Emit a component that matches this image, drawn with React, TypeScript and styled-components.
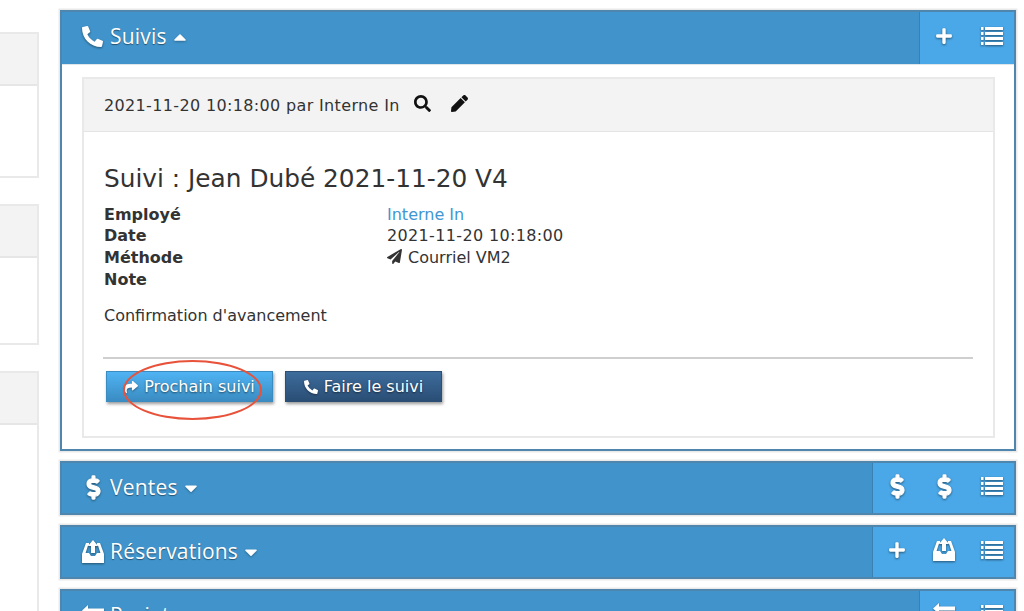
import React from "react";
import styled, { createGlobalStyle } from "styled-components";
import { FaPhoneAlt, FaPlus, FaSearch, FaPen, FaPaperPlane, FaDollarSign, FaShare, FaCaretUp, FaCaretDown } from "react-icons/fa";

const Global = createGlobalStyle`
  html, body { margin: 0; padding: 0; background: #fff; overflow: hidden; height: 611px; }
  body { font-family: "DejaVu Sans", Verdana, sans-serif; color: #333; }
`;

const Page = styled.div`
  width: 1024px; height: 611px; overflow: hidden;
  display: flex; align-items: flex-start; gap: 21px;
`;
const Sidebar = styled.aside`
  width: 39px; flex: none; padding-top: 32px;
  display: flex; flex-direction: column; gap: 26px;
`;
const SideCard = styled.div<{ $h: number }>`
  height: ${p => p.$h}px; box-sizing: border-box;
  border: 2px solid #e9e9e9; border-left: 0; background: #fff;
`;
const SideHead = styled.div`
  height: 50px; background: #f3f3f3; border-bottom: 2px solid #e6e6e6;
`;
const Main = styled.main`
  width: 956px; flex: none; margin-top: -14px;
  display: flex; flex-direction: column; gap: 10px;
`;
const TopSliver = styled.div`
  height: 14px; box-sizing: border-box; border-bottom: 2px solid #e4e6e8;
`;
const Panel = styled.section`
  border: 2px solid #4f86ad; box-sizing: border-box; background: #fff;
  box-shadow: 0 0 0 1.5px #e9e9e9;
`;
const PanelBar = styled.header<{ $open?: boolean }>`
  height: ${p => (p.$open ? 52 : 50)}px; background: #4094cb; display: flex; align-items: stretch; justify-content: space-between;
  color: #fff; text-shadow: 0 1px 1px rgba(0,0,0,.45);
`;
const PanelTitle = styled.h2<{ $open?: boolean }>`
  margin: 0; padding: 0 0 ${p => (p.$open ? 3 : 1)}px 20px; display: flex; align-items: center;
  font: 400 21px/1 "Open Sans", sans-serif; letter-spacing: .2px; color: #fff;
`;
const TitleIcon = styled.span`
  width: 28px; display: inline-flex; justify-content: flex-start; font-size: 21px;
  svg { filter: drop-shadow(0 1px 1px rgba(0,0,0,.45)); display: block; }
`;
const Caret = styled.span`
  margin-left: 3px; display: inline-flex; font-size: 20px;
  svg { display: block; filter: drop-shadow(0 1px 1px rgba(0,0,0,.3)); }
`;
const Actions = styled.div`
  display: flex; background: #4aa8e8; border-left: 1px solid #3a80b0;
`;
const ActionButton = styled.button`
  width: 47px; box-sizing: border-box; padding: 0 0 4px 1px; border: 0; background: transparent; color: #fff;
  display: flex; align-items: center; justify-content: center; font-size: 21px;
  &:last-child { padding-left: 3px; }
  svg { display: block; filter: drop-shadow(0 1.5px 1px rgba(0,0,0,.5)); }
`;
const PanelBody = styled.div`
  padding: 12px 19px 11px 20px; border-top: 1px solid #dfe6ea;
`;
const Card = styled.article`
  border: 2px solid #e9e9e9; background: #fff;
`;
const CardHead = styled.div`
  height: 53px; box-sizing: border-box; background: #f3f3f3; border-bottom: 1px solid #e4e4e4;
  display: flex; align-items: center; padding: 1px 0 0 20px; font-size: 16px; letter-spacing: .35px; color: #333;
`;
const HeadIcon = styled.span<{ $gap: number }>`
  margin-left: ${p => p.$gap}px; display: inline-flex; font-size: 17px; color: #111; position: relative; top: -2px;
  svg { display: block; }
`;
const CardBody = styled.div`
  padding: 31px 20px 34px 20px;
`;
const Title = styled.h3`
  margin: 0 0 9px; font: 400 24.8px/32px "DejaVu Sans", Verdana, sans-serif; color: #333;
`;
const Facts = styled.dl`
  margin: 0; display: grid; grid-template-columns: 283px 1fr; font-size: 16px; line-height: 21.3px;
  dt { font-weight: 700; }
  dd { margin: 0; }
`;
const Link = styled.a`
  color: #3f97d3; text-decoration: none;
`;
const DateText = styled.span`
  letter-spacing: .35px;
`;
const Send = styled.span`
  margin-right: 6px; font-size: 15px; position: relative; top: 1px;
`;
const Note = styled.p`
  margin: 15px 0 31px; font-size: 16px; line-height: 21px;
`;
const Rule = styled.hr`
  margin: 0 0 12px -1px; border: 0; height: 2px; background: #cfcfcf; width: 870px;
`;
const ButtonRow = styled.div`
  position: relative; display: flex; gap: 12px; margin-left: -1px; padding-left: 3px;
`;
const Btn = styled.button<{ $dark?: boolean; $w: number }>`
  width: ${p => p.$w}px; height: 31px; padding: 0; box-sizing: border-box;
  font: 400 16px/1 "DejaVu Sans", Verdana, sans-serif; color: #fff;
  display: flex; align-items: center; justify-content: center; gap: 6px;
  border: 1px solid ${p => (p.$dark ? "#2c4f73" : "#3a8cc0")};
  background: ${p => (p.$dark ? "linear-gradient(#3d6c9c, #2a4e75)" : "linear-gradient(#4fb3f3, #3a8cc2)")};
  box-shadow: 1px 2px 3px rgba(0,0,0,.4);
  text-shadow: 0 1px 2px rgba(0,0,0,.55);
  svg { display: block; filter: drop-shadow(0 1px 1px rgba(0,0,0,.4)); }
`;
const Highlight = styled.span`
  position: absolute; left: 20px; top: -11px; width: 139px; height: 60px; box-sizing: border-box;
  border: 2px solid #e8523a; border-radius: 50%; pointer-events: none;
`;
const BoldDollar = styled(FaDollarSign)`
  stroke: currentColor; stroke-width: 28px; overflow: visible;
`;

const ListIcon = () => (
  <svg width="22" height="20" viewBox="0 0 22 20" fill="currentColor">
    <rect x="0" y="1" width="2.5" height="3" /><rect x="4" y="1" width="18" height="3" />
    <rect x="0" y="6" width="2.5" height="3" /><rect x="4" y="6" width="18" height="3" />
    <rect x="0" y="11" width="2.5" height="3" /><rect x="4" y="11" width="18" height="3" />
    <rect x="0" y="16" width="2.5" height="3" /><rect x="4" y="16" width="18" height="3" />
  </svg>
);
const TrayIcon = () => (
  <svg width="22" height="24" viewBox="0 0 22 24" fill="currentColor">
    <path d="M11 0l5 6h-3v7H9V6H6z" />
    <path d="M0 14L4 3h3v2.6H6L3.6 13H7l2 3h4l2-3h3.4L16 5.6h-1V3h3l4 11v9H0z" />
  </svg>
);
const TransferIcon = () => (
  <svg width="22" height="22" viewBox="0 0 22 22" fill="currentColor">
    <path d="M0 5.5L6 0v3.5h16v4H6V11z" />
    <path d="M22 16.5L16 22v-3.5H0v-4h16V11z" />
  </svg>
);

const Bar = ({ icon, title, open, actions }: { icon: React.ReactNode; title: string; open?: boolean; actions: React.ReactNode[] }) => (
  <PanelBar $open={open}>
    <PanelTitle $open={open}>
      <TitleIcon>{icon}</TitleIcon>
      {title}
      <Caret>{open ? <FaCaretUp /> : <FaCaretDown />}</Caret>
    </PanelTitle>
    <Actions>
      {actions.map((a, i) => <ActionButton key={i}>{a}</ActionButton>)}
    </Actions>
  </PanelBar>
);

export default function App() {
  return (
    <Page>
      <Global />
      <Sidebar>
        <SideCard $h={146}><SideHead /></SideCard>
        <SideCard $h={141}><SideHead /></SideCard>
        <SideCard $h={300}><SideHead /></SideCard>
      </Sidebar>
      <Main>
        <TopSliver />
        <Panel>
          <Bar icon={<FaPhoneAlt />} title="Suivis" open actions={[<FaPlus key="p" size={18} />, <ListIcon key="l" />]} />
          <PanelBody>
            <Card>
              <CardHead>
                2021-11-20 10:18:00 par Interne In
                <HeadIcon $gap={14}><FaSearch /></HeadIcon>
                <HeadIcon $gap={20}><FaPen /></HeadIcon>
              </CardHead>
              <CardBody>
                <Title>Suivi : Jean Dubé 2021-11-20 V4</Title>
                <Facts>
                  <dt>Employé</dt><dd><Link href="#">Interne In</Link></dd>
                  <dt>Date</dt><dd><DateText>2021-11-20 10:18:00</DateText></dd>
                  <dt>Méthode</dt><dd><Send><FaPaperPlane /></Send>Courriel VM2</dd>
                  <dt>Note</dt><dd />
                </Facts>
                <Note>Confirmation d'avancement</Note>
                <Rule />
                <ButtonRow>
                  <Btn $w={167}><FaShare size={14} />Prochain suivi</Btn>
                  <Btn $dark $w={157}><FaPhoneAlt size={14} />Faire le suivi</Btn>
                  <Highlight />
                </ButtonRow>
              </CardBody>
            </Card>
          </PanelBody>
        </Panel>
        <Panel>
          <Bar icon={<BoldDollar size={23} />} title="Ventes" actions={[<BoldDollar key="a" size={23} />, <BoldDollar key="b" size={23} />, <ListIcon key="l" />]} />
        </Panel>
        <Panel>
          <Bar icon={<TrayIcon />} title="Réservations" actions={[<FaPlus key="p" size={18} />, <TrayIcon key="t" />, <ListIcon key="l" />]} />
        </Panel>
        <Panel>
          <Bar icon={<TransferIcon />} title="Projets" actions={[<TransferIcon key="a" />, <ListIcon key="l" />]} />
        </Panel>
      </Main>
    </Page>
  );
}
